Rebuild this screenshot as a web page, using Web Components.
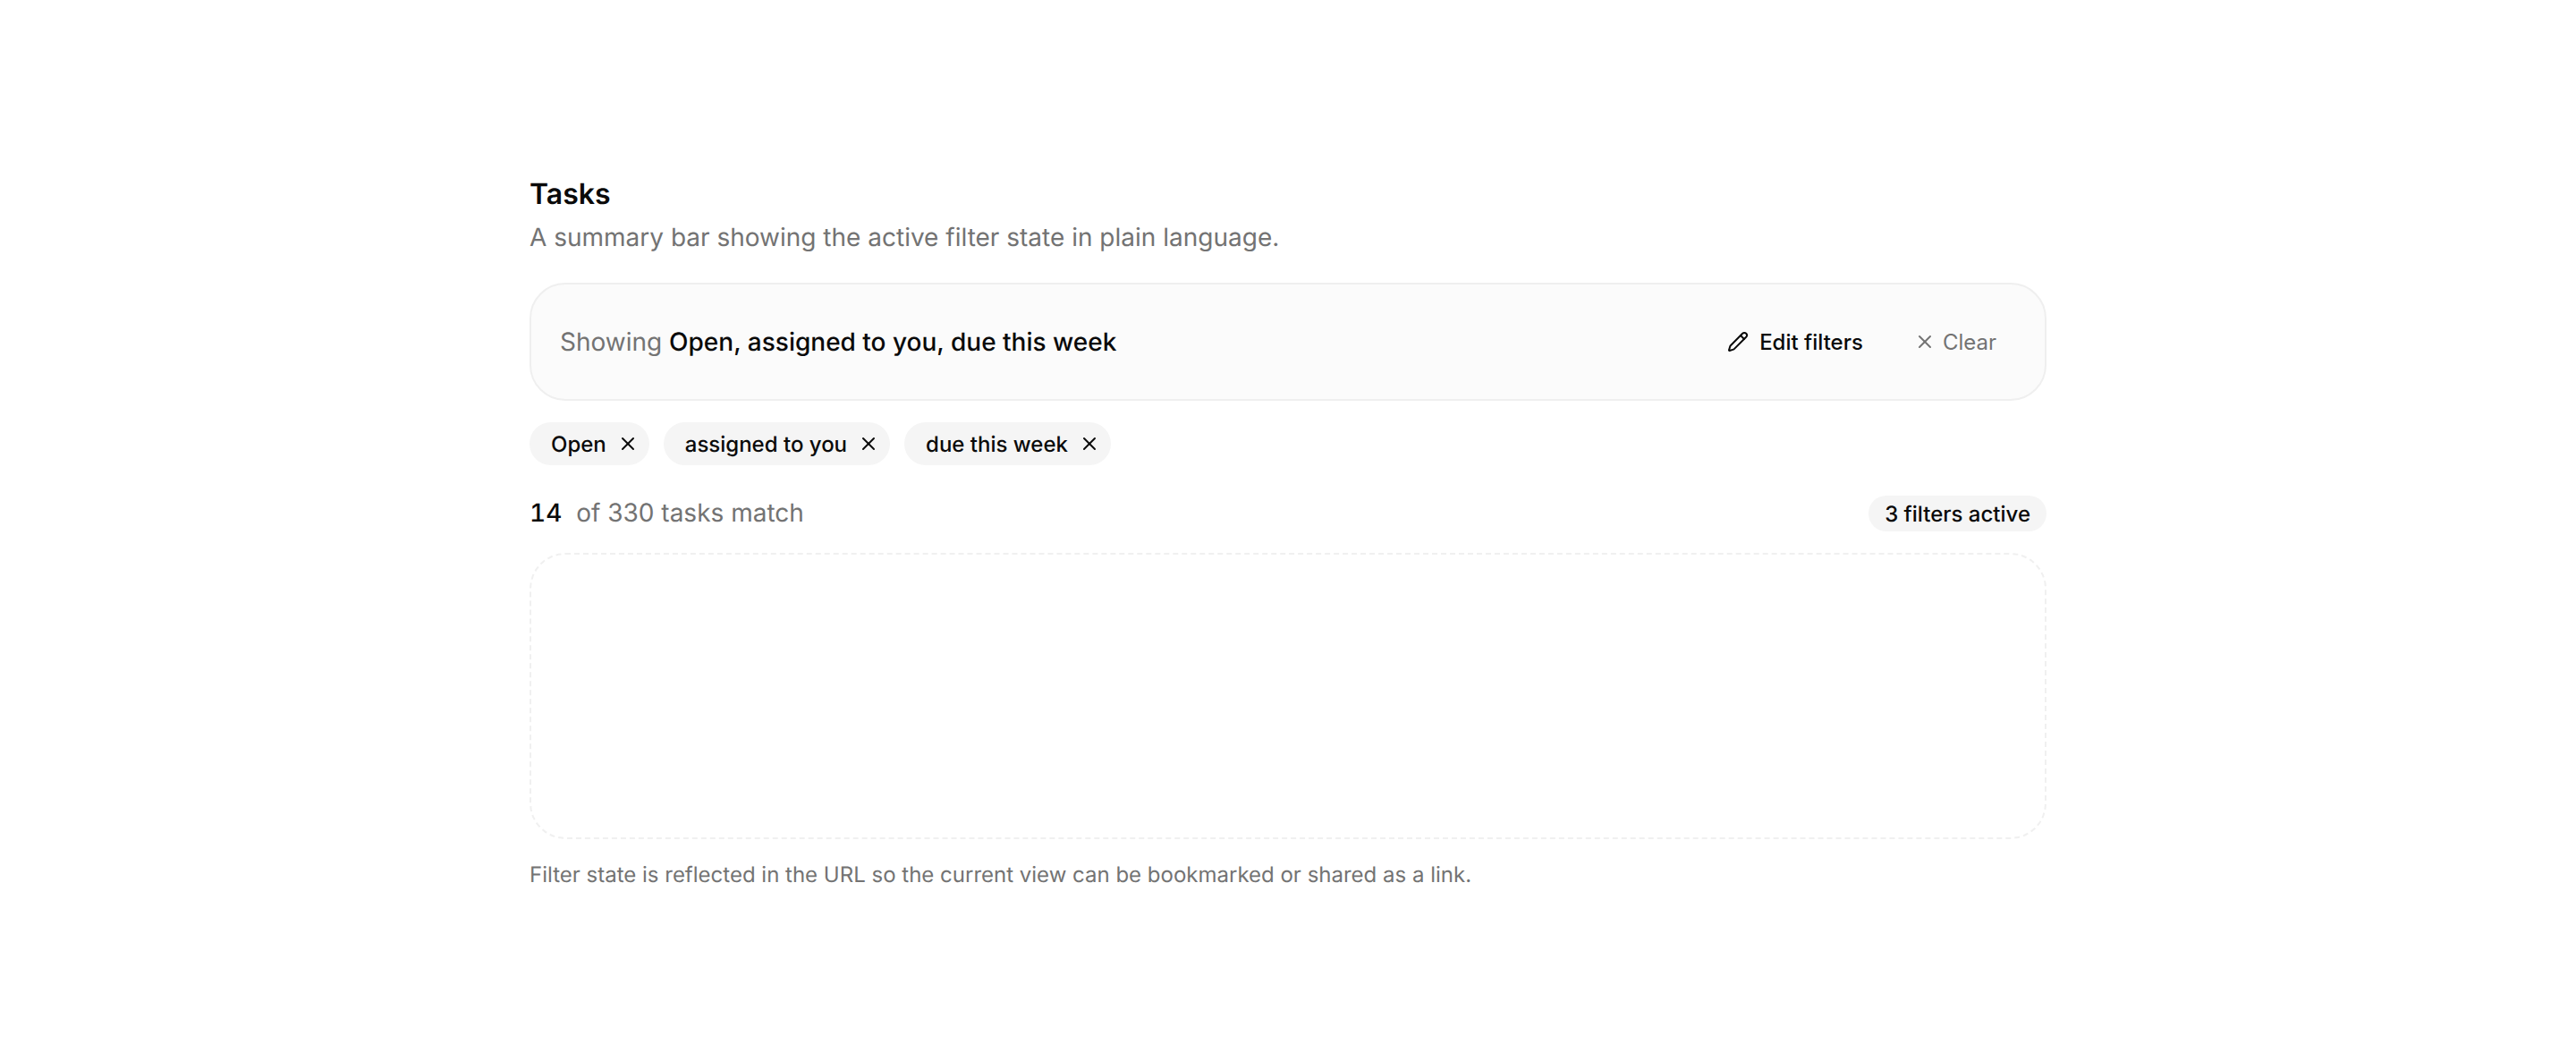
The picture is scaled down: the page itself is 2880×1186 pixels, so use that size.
<!DOCTYPE html>
<html lang="en">
<head>
<meta charset="utf-8">
<title>Tasks</title>
<style>
  html, body { margin: 0; background: #fff; }
  body { font-family: Inter, "Liberation Sans", sans-serif; color: #0a0a0a; text-rendering: geometricPrecision; }
</style>
</head>
<body>
<task-page>
  <span slot="title">Tasks</span>
  <span slot="subtitle">A summary bar showing the active filter state in plain language.</span>
  <summary-bar slot="bar"></summary-bar>
  <filter-chip slot="chips">Open</filter-chip>
  <filter-chip slot="chips">assigned to you</filter-chip>
  <filter-chip slot="chips">due this week</filter-chip>
  <result-count slot="count" shown="14" total="330" active="3"></result-count>
  <span slot="note">Filter state is reflected in the URL so the current view can be bookmarked or shared as a link.</span>
</task-page>

<script>
const ICONS = {
  x: '<path d="M18 6 6 18"/><path d="m6 6 12 12"/>',
  pencil: '<path d="M21.174 6.812a1 1 0 0 0-3.986-3.987L3.842 16.174a2 2 0 0 0-.5.83l-1.321 4.352a.5.5 0 0 0 .623.622l4.353-1.32a2 2 0 0 0 .83-.497z"/><path d="m15 5 4 4"/>'
};
const icon = (name, size) => `<svg width="${size}" height="${size}" viewBox="0 0 24 24" fill="none" stroke="currentColor" stroke-width="2" stroke-linecap="round" stroke-linejoin="round">${ICONS[name]}</svg>`;

class TaskPage extends HTMLElement {
  constructor() {
    super();
    this.attachShadow({ mode: 'open' }).innerHTML = `
      <style>
        :host { display: block; }
        .wrap { width: 1696px; margin: 0 auto; padding-top: 196px; display: flex; flex-direction: column; }
        .title { font-size: 32px; line-height: 42px; font-weight: 600; }
        .subtitle { font-size: 28px; line-height: 42px; color: #737373; margin-top: 6px; }
        .bar { margin-top: 30px; }
        .chips { display: flex; gap: 16px; margin-top: 24px; }
        .count { margin-top: 34px; }
        .empty { height: 316px; margin-top: 24px; border: 2px dashed #f0f0f0; border-radius: 40px; }
        .note { font-size: 24px; line-height: 36px; color: #737373; margin-top: 22px; }
      </style>
      <div class="wrap">
        <div class="title"><slot name="title"></slot></div>
        <div class="subtitle"><slot name="subtitle"></slot></div>
        <div class="bar"><slot name="bar"></slot></div>
        <div class="chips"><slot name="chips"></slot></div>
        <div class="count"><slot name="count"></slot></div>
        <div class="empty"></div>
        <div class="note"><slot name="note"></slot></div>
      </div>`;
  }
}

class SummaryBar extends HTMLElement {
  constructor() {
    super();
    this.attachShadow({ mode: 'open' }).innerHTML = `
      <style>
        :host { display: flex; align-items: center; justify-content: space-between; height: 132px; box-sizing: border-box; padding: 0 32px; background: #fbfbfb; border: 2px solid #efefef; border-radius: 40px; }
        .text { font-size: 28px; color: #737373; }
        b { font-weight: 500; color: #0a0a0a; }
        .actions { display: flex; align-items: center; gap: 13px; }
        button { display: flex; align-items: center; gap: 12px; padding: 0 22px; background: none; border: 0; font: 500 24px Inter, sans-serif; color: #0a0a0a; }
        button.muted { color: #737373; font-weight: 400; gap: 8px; }
      </style>
      <div class="text">Showing <b>Open, assigned to you, due this week</b></div>
      <div class="actions">
        <button>${icon('pencil', 24)}Edit filters</button>
        <button class="muted">${icon('x', 24)}Clear</button>
      </div>`;
  }
}

class FilterChip extends HTMLElement {
  constructor() {
    super();
    this.attachShadow({ mode: 'open' }).innerHTML = `
      <style>
        :host { display: inline-flex; align-items: center; gap: 12px; height: 48px; padding: 0 12px 0 24px; background: #f5f5f5; border-radius: 24px; font-size: 24px; font-weight: 500; }
        svg { display: block; }
      </style>
      <slot></slot>${icon('x', 24)}`;
  }
}

class ResultCount extends HTMLElement {
  constructor() {
    super();
    this.attachShadow({ mode: 'open' }).innerHTML = `
      <style>
        :host { display: flex; align-items: baseline; justify-content: space-between; }
        .text { font-size: 28px; color: #737373; }
        b { font-weight: 500; color: #0a0a0a; margin-right: 8px; font-variant-numeric: tabular-nums; }
        .pill { height: 40px; display: flex; align-items: center; padding: 0 18px; background: #f5f5f5; border-radius: 20px; font-size: 24px; font-weight: 500; color: #0a0a0a; }
      </style>
      <div class="text"><b>${this.getAttribute('shown')}</b> of ${this.getAttribute('total')} tasks match</div>
      <div class="pill">${this.getAttribute('active')} filters active</div>`;
  }
}

customElements.define('task-page', TaskPage);
customElements.define('summary-bar', SummaryBar);
customElements.define('filter-chip', FilterChip);
customElements.define('result-count', ResultCount);
</script>
</body>
</html>
